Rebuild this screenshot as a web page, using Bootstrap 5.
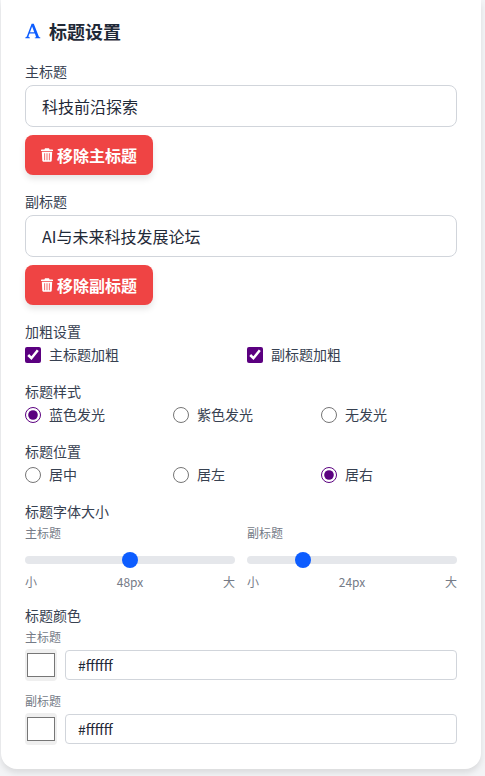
<!DOCTYPE html>
<html lang="zh">
<head>
<meta charset="utf-8">
<title>标题设置</title>
<link rel="stylesheet" href="https://cdn.jsdelivr.net/npm/bootstrap@5.3.0/dist/css/bootstrap.min.css">
<style>
html,body{height:776px;overflow:hidden}
body{background:#f3f4f6;font-family:"Noto Sans CJK SC","Noto Sans",sans-serif;color:#1f2937}
.panel{width:480px;margin-left:1px;height:769px;background:#fff;border-radius:0 0 16px 16px;box-shadow:0 4px 6px rgba(0,0,0,.1);padding:19px 24px 0}
.head{font-size:18px;line-height:24px;font-weight:700;color:#1f2937;margin-bottom:18px}
.head svg{display:block}
.block{margin-bottom:16px}
.block-tight{margin-bottom:15px}
.lbl{display:block;font-size:14px;line-height:20px;color:#374151;margin:0 0 4px}
.txt{height:42px;border:1px solid #d1d5db;border-radius:8px;padding:8px 16px;font-size:16px;color:#1f2937;box-shadow:none}
.del{height:40px;margin-top:8px;padding:0 16px 0 15px;background:#ef4444;border:0;border-radius:8px;color:#fff;font-size:16px;font-weight:700;line-height:24px;box-shadow:0 4px 6px rgba(0,0,0,.1)}
.del:hover{background:#ef4444;color:#fff}
.chk{width:16px;height:16px;margin:0;accent-color:#5b0080;flex:none}
.opt{font-size:14px;line-height:18px;height:20px;color:#374151}
.opt span{display:block;padding-bottom:2px}
.two{display:grid;grid-template-columns:repeat(2,1fr);column-gap:12px}
.three{display:grid;grid-template-columns:repeat(3,1fr);column-gap:12px}
.sub{display:block;font-size:12px;line-height:16px;color:#757b87}
.rng{display:block;width:210px;height:16px;margin-top:11px;padding:0}
.rng::-webkit-slider-runnable-track{height:8px;background:#e5e7eb;border-radius:8px}
.rng::-webkit-slider-thumb{width:16px;height:16px;margin-top:-4px;background:#0d5dff;border-radius:50%}
.scale{font-size:12px;line-height:16px;color:#757b87;margin-top:6px}
.swatch{width:32px;height:32px;padding:4px 2px;background:#efefef;border:0;border-radius:4px;flex:none}
.swatch::-webkit-color-swatch-wrapper{padding:0}
.swatch::-webkit-color-swatch{border:1px solid #767676;border-radius:0}
.hex{height:30px;border:1px solid #d1d5db;border-radius:4px;padding:0 12px;font-size:14px;color:#1f2937}
.colorrow{margin-top:4px}
.colorrow-gap{margin-bottom:12px}
.bin{margin-left:1px}
</style>
</head>
<body>
<main class="panel">
  <h2 class="head d-flex align-items-center gap-2">
    <svg width="16" height="16" viewBox="0 0 16 16" fill="#0d5dff" aria-hidden="true"><path d="M6.600 .7h2.200l5 12.900c.2.500.6.800 1.500.9v.8H9.800v-.8c1.100 0 1.400-.4 1.100-1.100l-1-2.900H4.500l-.9 2.600c-.3.800.1 1.300 1.300 1.400v.8H.3v-.8c.8-.1 1.300-.5 1.600-1.200zM7.100 3.600 5 9.300h4.300z"/></svg>
    <span>标题设置</span>
  </h2>

  <div class="block">
    <label class="lbl">主标题</label>
    <input class="form-control txt" type="text" value="科技前沿探索">
    <button class="btn del d-inline-flex align-items-center gap-1" type="button">
      <svg class="bin" width="12" height="14" viewBox="0 0 12 14" fill="#fff" aria-hidden="true"><path fill-rule="evenodd" d="M4 .3h4l.6 1.200h2.700c.4 0 .7.300.7.700v.8H0v-.8c0-.4.3-.7.7-.7h2.700zM.8 3.800h10.400l-.5 9c0 .5-.5.9-1 .9H2.300c-.5 0-1-.4-1-.9zm2.500 1.400v7h.8v-7zm2.300 0v7h.8v-7zm2.300 0v7h.8v-7z"/></svg>
      <span>移除主标题</span>
    </button>
  </div>

  <div class="block">
    <label class="lbl">副标题</label>
    <input class="form-control txt" type="text" value="AI与未来科技发展论坛">
    <button class="btn del d-inline-flex align-items-center gap-1" type="button">
      <svg class="bin" width="12" height="14" viewBox="0 0 12 14" fill="#fff" aria-hidden="true"><path fill-rule="evenodd" d="M4 .3h4l.6 1.200h2.700c.4 0 .7.300.7.700v.8H0v-.8c0-.4.3-.7.7-.7h2.700zM.8 3.800h10.400l-.5 9c0 .5-.5.9-1 .9H2.300c-.5 0-1-.4-1-.9zm2.500 1.400v7h.8v-7zm2.300 0v7h.8v-7zm2.300 0v7h.8v-7z"/></svg>
      <span>移除副标题</span>
    </button>
  </div>

  <div class="block">
    <label class="lbl">加粗设置</label>
    <div class="two">
      <label class="opt d-flex align-items-center gap-2"><input class="chk" type="checkbox" checked><span>主标题加粗</span></label>
      <label class="opt d-flex align-items-center gap-2"><input class="chk" type="checkbox" checked><span>副标题加粗</span></label>
    </div>
  </div>

  <div class="block">
    <label class="lbl">标题样式</label>
    <div class="three">
      <label class="opt d-flex align-items-center gap-2"><input class="chk" type="radio" name="s" checked><span>蓝色发光</span></label>
      <label class="opt d-flex align-items-center gap-2"><input class="chk" type="radio" name="s"><span>紫色发光</span></label>
      <label class="opt d-flex align-items-center gap-2"><input class="chk" type="radio" name="s"><span>无发光</span></label>
    </div>
  </div>

  <div class="block">
    <label class="lbl">标题位置</label>
    <div class="three">
      <label class="opt d-flex align-items-center gap-2"><input class="chk" type="radio" name="p"><span>居中</span></label>
      <label class="opt d-flex align-items-center gap-2"><input class="chk" type="radio" name="p"><span>居左</span></label>
      <label class="opt d-flex align-items-center gap-2"><input class="chk" type="radio" name="p" checked><span>居右</span></label>
    </div>
  </div>

  <div class="block-tight">
    <label class="lbl">标题字体大小</label>
    <div class="two">
      <div>
        <span class="sub">主标题</span>
        <input class="form-range rng" type="range" min="12" max="84" value="48">
        <div class="scale d-flex justify-content-between"><span>小</span><span>48px</span><span>大</span></div>
      </div>
      <div>
        <span class="sub">副标题</span>
        <input class="form-range rng" type="range" min="12" max="61" value="24">
        <div class="scale d-flex justify-content-between"><span>小</span><span>24px</span><span>大</span></div>
      </div>
    </div>
  </div>

  <div>
    <label class="lbl">标题颜色</label>
    <span class="sub">主标题</span>
    <div class="colorrow colorrow-gap d-flex align-items-center gap-2">
      <input class="swatch" type="color" value="#ffffff">
      <input class="form-control hex" type="text" value="#ffffff">
    </div>
    <span class="sub">副标题</span>
    <div class="colorrow d-flex align-items-center gap-2">
      <input class="swatch" type="color" value="#ffffff">
      <input class="form-control hex" type="text" value="#ffffff">
    </div>
  </div>
</main>
<script src="https://cdn.jsdelivr.net/npm/bootstrap@5.3.0/dist/js/bootstrap.bundle.min.js"></script>
</body>
</html>
